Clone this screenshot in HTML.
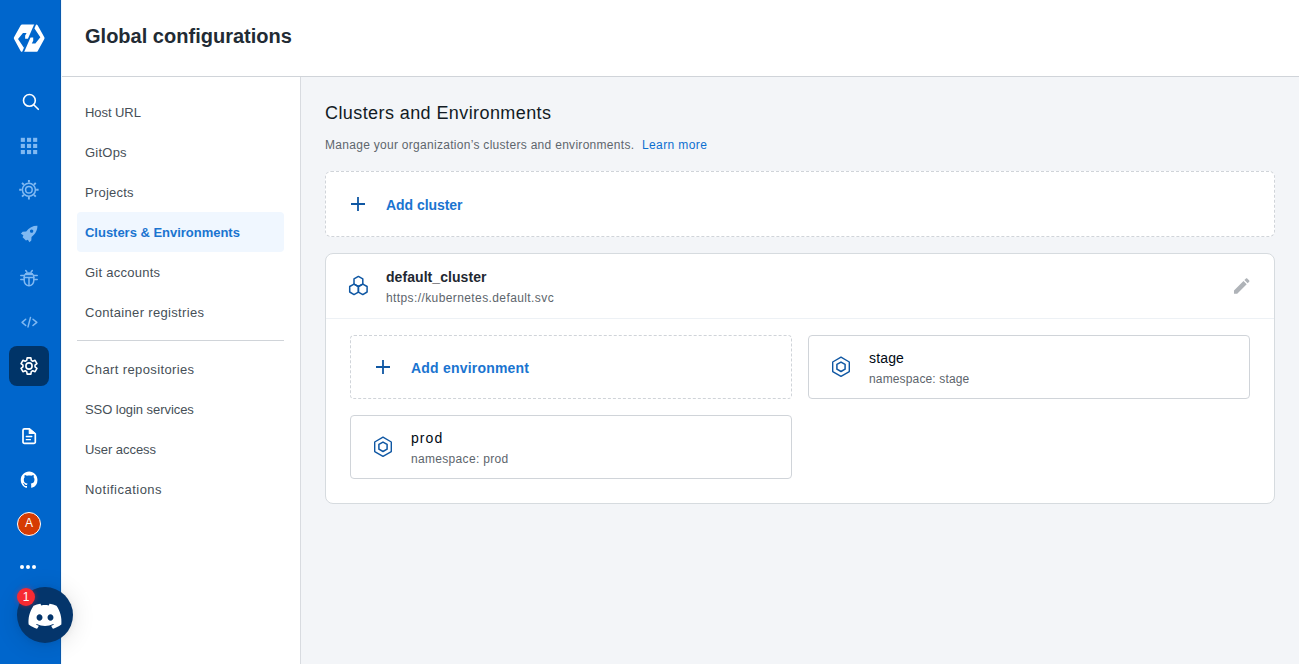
<!DOCTYPE html>
<html lang="en">
<head>
<meta charset="utf-8">
<title>Global configurations</title>
<style>
*{box-sizing:border-box;margin:0;padding:0}
html,body{width:1299px;height:664px;overflow:hidden;background:#fff}
body{font-family:"Liberation Sans",sans-serif;color:#000a14;position:relative;font-size:13px}
.abs{position:absolute}
/* sidebar */
#side{position:absolute;left:0;top:0;width:61px;height:664px;background:#0066cc;border-right:1px solid #0a59ad;box-shadow:1px 0 0 #eef8ff}
#side svg{position:absolute}
.act{position:absolute;left:9px;top:346px;width:40px;height:40px;border-radius:8px;background:#003468}
.avatar{position:absolute;left:17px;top:512px;width:24px;height:24px;border-radius:50%;background:#d63b02;border:1.4px solid #fff;color:#fff;font-size:12px;line-height:21px;text-align:center}
/* header */
#head{position:absolute;left:61px;top:0;width:1238px;height:77px;background:#fff;border-bottom:1px solid #d0d4d9}
#head h1{position:absolute;left:24px;top:22px;font-size:20px;line-height:28px;font-weight:700;color:#222b34;white-space:nowrap}
/* nav */
#nav{position:absolute;left:61px;top:77px;width:240px;height:587px;background:#fff;border-right:1px solid #d8dbe0}
#nav a{position:absolute;left:16px;width:207px;height:40px;padding-left:8px;line-height:42px;overflow:hidden;font-size:13px;color:#464f57;white-space:nowrap;border-radius:4px;text-decoration:none}
#nav a.on{background:#f0f7ff;color:#1a74d0;font-weight:700}
#nav hr{position:absolute;left:16px;width:207px;top:263px;border:0;border-top:1px solid #d0d4d9}
/* content */
#main{position:absolute;left:301px;top:77px;width:998px;height:587px;background:#f3f5f8}
#main h2{position:absolute;left:24px;top:24px;font-size:18px;line-height:24px;font-weight:400;color:#121b24;white-space:nowrap}
#main .sub{position:absolute;left:24px;top:59px;font-size:12px;line-height:18px;color:#5e666d;white-space:nowrap}
#main .sub b{font-weight:400;color:#0d6fd0;margin-left:4px}
.addc{position:absolute;left:24px;top:94px;width:950px;height:66px;background:#fff;border:1px dashed #d0d4d9;border-radius:6px}
.card{position:absolute;left:24px;top:176px;width:950px;height:251px;background:#fff;border:1px solid #d6dbdf;border-radius:8px}
.card .sep{position:absolute;left:0;top:64px;width:948px;height:1px;background:#edf1f5}
.env{position:absolute;width:442px;height:64px;background:#fff;border:1px solid #d0d4d9;border-radius:4px}
.env.dash{border-style:dashed}
.t1{position:absolute;font-size:14px;line-height:20px;color:#000a14;white-space:nowrap}
.t2{position:absolute;font-size:12px;line-height:18px;color:#5d656c;white-space:nowrap}
.lnk{position:absolute;font-size:14px;line-height:20px;font-weight:700;color:#1a74d0;white-space:nowrap}
/* discord */
.disc{position:absolute;left:17px;top:587px;width:56px;height:56px;border-radius:50%;background:#04356b;box-shadow:0 1px 6px rgba(0,0,0,.06),0 2px 24px rgba(0,0,0,.12)}
.badge{position:absolute;left:17px;top:588px;width:18px;height:18px;border-radius:50%;background:#f72a32;box-shadow:0 0 5px rgba(255,40,50,.45);color:#fff;font-size:12px;line-height:18px;text-align:center}
</style>
</head>
<body>
<div id="head"><h1 style="letter-spacing:0.013px">Global configurations</h1></div>

<div id="nav">
  <a style="letter-spacing:-0.064px;top:15px">Host URL</a>
  <a style="letter-spacing:0.234px;top:55px">GitOps</a>
  <a style="letter-spacing:0.231px;top:95px">Projects</a>
  <a class="on" style="letter-spacing:-0.019px;top:135px">Clusters &amp; Environments</a>
  <a style="letter-spacing:0.251px;top:175px">Git accounts</a>
  <a style="letter-spacing:0.329px;top:215px">Container registries</a>
  <hr>
  <a style="letter-spacing:0.383px;top:272px">Chart repositories</a>
  <a style="letter-spacing:-0.058px;top:312px">SSO login services</a>
  <a style="letter-spacing:-0.050px;top:352px">User access</a>
  <a style="letter-spacing:0.478px;top:392px">Notifications</a>
</div>

<div id="main">
  <h2 style="letter-spacing:0.411px">Clusters and Environments</h2>
  <div class="sub" style="letter-spacing:.29px">Manage your organization’s clusters and environments. <b style="letter-spacing:.4px">Learn more</b></div>
  <div class="addc">
    <span class="lnk" style="letter-spacing:-0.047px;left:60px;top:23px">Add cluster</span>
  </div>
  <div class="card">
    <span class="t1" style="letter-spacing:0.063px;left:60px;top:13px;font-weight:700;color:#1f2831">default_cluster</span>
    <span class="t2" style="letter-spacing:0.398px;left:60px;top:35px">https://kubernetes.default.svc</span>
    <div class="sep"></div>
    <div class="env dash" style="left:24px;top:81px"><span class="lnk" style="letter-spacing:0.207px;left:60px;top:22px">Add environment</span></div>
    <div class="env" style="left:482px;top:81px"><span class="t1" style="letter-spacing:0.165px;left:60px;top:12px">stage</span><span class="t2" style="letter-spacing:0.148px;left:60px;top:34px">namespace: stage</span></div>
    <div class="env" style="left:24px;top:161px"><span class="t1" style="letter-spacing:1.080px;left:60px;top:12px">prod</span><span class="t2" style="letter-spacing:0.317px;left:60px;top:34px">namespace: prod</span></div>
  </div>
</div>

<div id="side">
  <div class="act"></div>
  <div class="avatar">A</div>
</div>
<div class="disc"></div>

<svg id="ico" class="abs" style="left:0;top:0;pointer-events:none" width="1299" height="664" viewBox="0 0 1299 664">
  <!-- logo -->
  <g transform="translate(9,18) scale(0.06024)">
    <path d="M110 335 L218.5 138 H451.5 L560 335 L451.5 532 H218.5 Z" fill="#fff" stroke="#fff" stroke-width="60" stroke-linejoin="round"/>
    <g id="lg">
      <path d="M150 350 L232 248 H292 L268 292 V345 H335 L250 500 Z" fill="#0066cc"/>
    </g>
    <use href="#lg" transform="rotate(180 335 335)"/>
    <path d="M440 95 L230 575" stroke="#0066cc" stroke-width="30" fill="none"/>
  </g>
  <!-- search -->
  <g fill="none" stroke="#fff" stroke-width="1.6" stroke-linecap="round">
    <circle cx="29.4" cy="100.4" r="5.9"/><path d="M33.7 104.7 L38.3 109.3"/>
  </g>
  <!-- grid -->
  <g fill="#80b9f2">
    <rect x="20.8" y="137.8" width="4.1" height="4.1"/><rect x="27" y="137.8" width="4.1" height="4.1"/><rect x="33.1" y="137.8" width="4.1" height="4.1"/>
    <rect x="20.8" y="143.9" width="4.1" height="4.1"/><rect x="27" y="143.9" width="4.1" height="4.1"/><rect x="33.1" y="143.9" width="4.1" height="4.1"/>
    <rect x="20.8" y="150" width="4.1" height="4.1"/><rect x="27" y="150" width="4.1" height="4.1"/><rect x="33.1" y="150" width="4.1" height="4.1"/>
  </g>
  <!-- helm -->
  <g fill="none" stroke="#80b9f2" stroke-width="1.5">
    <circle cx="28.9" cy="189.8" r="6.5"/><circle cx="28.9" cy="189.8" r="3.3"/>
    <path stroke-width="1.9" d="M36.10 189.80 L38.60 189.80 M33.99 194.89 L35.76 196.66 M28.90 197.00 L28.90 199.50 M23.81 194.89 L22.04 196.66 M21.70 189.80 L19.20 189.80 M23.81 184.71 L22.04 182.94 M28.90 182.60 L28.90 180.10 M33.99 184.71 L35.76 182.94"/>
  </g>
  <!-- rocket -->
  <g fill="#80b9f2">
    <path fill-rule="evenodd" d="M37.4 225.8 C33.5 225.6 29 227.6 26.2 231.6 L22.6 231.8 L20.9 233.7 L23.4 235.2 L22.6 237.3 L25.9 240.6 L27.9 239.7 L29.4 242.2 L31.3 240.5 L31.5 236.9 C35.5 234.1 37.6 229.7 37.4 225.8 Z M31.6 229.4 a1.7 1.7 0 1 0 0.01 0 Z"/>
  </g>
  <!-- bug -->
  <g fill="none" stroke="#80b9f2" stroke-width="1.5" stroke-linecap="round">
    <path d="M24.2 277 a4.8 4 0 0 1 9.6 0 v3.6 a4.8 5.2 0 0 1 -9.6 0 Z"/>
    <path d="M24.2 277.4 H33.8 M29 277.4 V285.4 M20.8 275.4 H24 M34 275.4 H37.2 M20.8 279.5 H24 M34 279.5 H37.2 M25.7 270.5 L27 272.2 M32.3 270.5 L31 272.2"/>
    <path d="M25.2 274.1 H32.8" stroke-width="2.2" stroke-linecap="butt"/>
  </g>
  <!-- code -->
  <g fill="none" stroke="#80b9f2" stroke-width="1.5" stroke-linecap="round" stroke-linejoin="round">
    <path d="M25.7 319.2 L22.1 322.4 L25.7 325.5 M30.5 317.4 L28 326.9 M33 319.2 L36.8 322.4 L33 325.5"/>
  </g>
  <!-- settings (active) -->
  <g fill="none" stroke="#fff" stroke-width="1.6" stroke-linejoin="round">
    <path d="M26.71 360.34 L27.13 357.91 L30.87 357.91 L31.29 360.34 L32.76 361.19 L35.07 360.34 L36.94 363.57 L35.04 365.15 L35.04 366.85 L36.94 368.43 L35.07 371.66 L32.76 370.81 L31.29 371.66 L30.87 374.09 L27.13 374.09 L26.71 371.66 L25.24 370.81 L22.93 371.66 L21.06 368.43 L22.96 366.85 L22.96 365.15 L21.06 363.57 L22.93 360.34 L25.24 361.19Z"/>
    <circle cx="29" cy="366" r="3.1"/>
  </g>
  <!-- doc -->
  <g fill="none" stroke="#fff" stroke-width="1.7" stroke-linejoin="round" stroke-linecap="round">
    <path d="M24.5 428.8 H29.4 L35.3 433.8 V441.9 a1.5 1.5 0 0 1 -1.5 1.5 H24.5 a1.5 1.5 0 0 1 -1.5 -1.5 V430.3 a1.5 1.5 0 0 1 1.5 -1.5 Z"/>
    <path d="M29.3 429 V433.5 H35 Z" stroke-width="1.2" fill="#fff"/>
    <path d="M26.3 436.5 H31.8 M26.3 439.7 H30.4" stroke-width="1.3"/>
  </g>
  <!-- github -->
  <path transform="translate(20.75,471.55) scale(1.045)" fill="#fff" d="M8 0C3.58 0 0 3.58 0 8c0 3.54 2.29 6.53 5.47 7.59.4.07.55-.17.55-.38 0-.19-.01-.82-.01-1.49-2.01.37-2.53-.49-2.69-.94-.09-.23-.48-.94-.82-1.13-.28-.15-.68-.52-.01-.53.63-.01 1.08.58 1.23.82.72 1.21 1.87.87 2.33.66.07-.52.28-.87.51-1.07-1.78-.2-3.64-.89-3.64-3.95 0-.87.31-1.59.82-2.15-.08-.2-.36-1.02.08-2.12 0 0 .67-.21 2.2.82.64-.18 1.32-.27 2-.27.68 0 1.36.09 2 .27 1.53-1.04 2.2-.82 2.2-.82.44 1.1.16 1.92.08 2.12.51.56.82 1.27.82 2.15 0 3.07-1.87 3.75-3.65 3.95.29.25.54.73.54 1.48 0 1.07-.01 1.93-.01 2.2 0 .21.15.46.55.38A8.013 8.013 0 0016 8c0-4.42-3.58-8-8-8z"/>
  <!-- dots -->
  <g fill="#fff"><circle cx="22" cy="567" r="2"/><circle cx="28" cy="567" r="2"/><circle cx="34" cy="567" r="2"/></g>

  <!-- plus icons -->
  <g fill="none" stroke="#0f57a3" stroke-width="1.8">
    <path d="M351 204 H365 M358 197 V211"/>
    <path d="M376 367 H390 M383 360 V374"/>
  </g>
  <!-- cluster icon -->
  <g fill="none" stroke="#0f57a3" stroke-width="1.5" stroke-linejoin="round" transform="translate(343,271)">
    <path d="M15.4 5.4 L19.8 7.9 V13.1 L15.4 15.5 L11.0 13.1 V7.9 Z"/>
    <path d="M11.0 13.1 L15.4 15.5 V21.1 L11.0 23.6 L6.7 21.0 V15.5 Z"/>
    <path d="M19.8 13.1 L24.1 15.5 V21.0 L19.8 23.6 L15.4 21.1 V15.5 Z"/>
  </g>
  <!-- env icons -->
  <g id="envi" fill="none" stroke="#0f57a3" stroke-width="1.4" stroke-linejoin="round">
    <path d="M841 357.2 L849.3 362 V371.6 L841 376.4 L832.7 371.6 V362 Z"/>
    <path d="M841 362.1 L845.1 364.45 V369.15 L841 371.5 L836.9 369.15 V364.45 Z" stroke-width="1.5"/>
  </g>
  <use href="#envi" transform="translate(-458,80)"/>
  <!-- pencil -->
  <path transform="translate(1231.4,275.6) scale(0.86)" fill="#afb3b8" d="M3 17.25V21h3.75L17.81 9.94l-3.75-3.75L3 17.25zM20.71 7.04c.39-.39.39-1.02 0-1.41l-2.34-2.34c-.39-.39-1.02-.39-1.41 0l-1.83 1.83 3.75 3.75 1.83-1.83z"/>
  <!-- discord -->
  <path transform="translate(28.5,599.7) scale(1.375)" fill="#fff" d="M20.317 4.3698a19.7913 19.7913 0 00-4.8851-1.5152.0741.0741 0 00-.0785.0371c-.211.3753-.4447.8648-.6083 1.2495-1.8447-.2762-3.68-.2762-5.4868 0-.1636-.3933-.4058-.8742-.6177-1.2495a.077.077 0 00-.0785-.037 19.7363 19.7363 0 00-4.8852 1.515.0699.0699 0 00-.0321.0277C.5334 9.0458-.319 13.5799.0992 18.0578a.0824.0824 0 00.0312.0561c2.0528 1.5076 4.0413 2.4228 5.9929 3.0294a.0777.0777 0 00.0842-.0276c.4616-.6304.8731-1.2952 1.226-1.9942a.076.076 0 00-.0416-.1057c-.6528-.2476-1.2743-.5495-1.8722-.8923a.077.077 0 01-.0076-.1277c.1258-.0943.2517-.1923.3718-.2914a.0743.0743 0 01.0776-.0105c3.9278 1.7933 8.18 1.7933 12.0614 0a.0739.0739 0 01.0785.0095c.1202.099.246.1981.3728.2924a.077.077 0 01-.0066.1276 12.2986 12.2986 0 01-1.873.8914.0766.0766 0 00-.0407.1067c.3604.698.7719 1.3628 1.225 1.9932a.076.076 0 00.0842.0286c1.961-.6067 3.9495-1.5219 6.0023-3.0294a.077.077 0 00.0313-.0552c.5004-5.177-.8382-9.6739-3.5485-13.6604a.061.061 0 00-.0312-.0286zM8.02 15.3312c-1.1825 0-2.1569-1.0857-2.1569-2.419 0-1.3332.9555-2.4189 2.157-2.4189 1.2108 0 2.1757 1.0952 2.1568 2.419 0 1.3332-.9555 2.4189-2.1569 2.4189zm7.9748 0c-1.1825 0-2.1569-1.0857-2.1569-2.419 0-1.3332.9554-2.4189 2.1569-2.4189 1.2108 0 2.1757 1.0952 2.1568 2.419 0 1.3332-.946 2.4189-2.1568 2.4189Z"/>
</svg>
<div class="badge">1</div>
</body>
</html>
